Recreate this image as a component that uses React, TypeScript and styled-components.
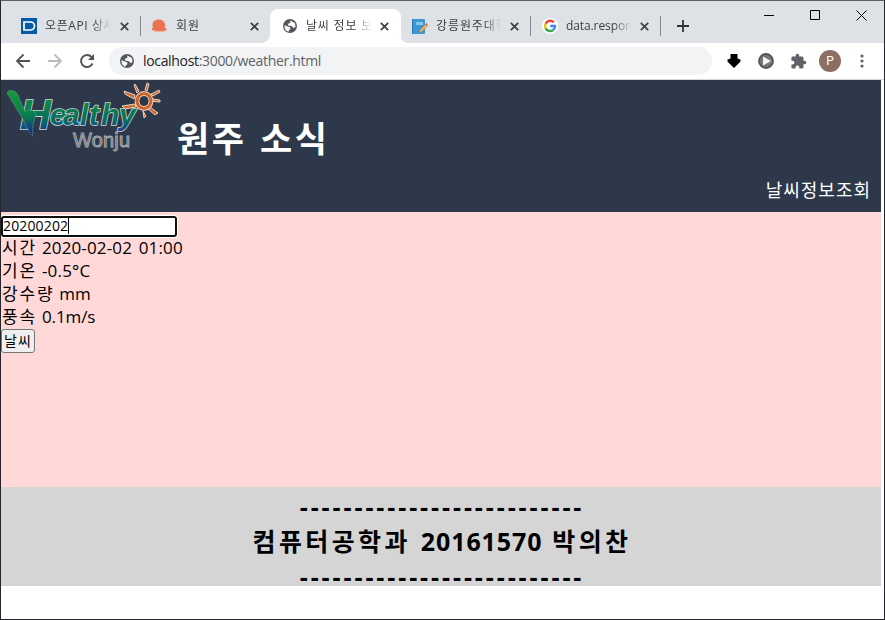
import React from "react";
import styled, { createGlobalStyle } from "styled-components";

const Global = createGlobalStyle`
  * { box-sizing: border-box; }
  body { margin: 0; background: #fff; font-family: "Open Sans", "Noto Sans CJK KR", sans-serif; }
  h1, h2, p { margin: 0; }
  svg { display: block; flex: none; }
`;

const Window = styled.div`
  width: 885px;
  height: 620px;
  border: 1px solid #24262b;
  border-top-color: #5d5e62;
  background: #fff;
  display: flex;
  flex-direction: column;
  overflow: hidden;
`;

const TabStrip = styled.div`
  height: 42px;
  background: #dee1e6;
  display: flex;
  padding: 8px 0 0 9px;
  flex: none;
`;

const Tab = styled.div<{ $active?: boolean; $divider?: boolean }>`
  position: relative;
  width: 130px;
  height: 34px;
  display: flex;
  align-items: center;
  padding: 0 9px 0 11px;
  border-radius: 8px 8px 0 0;
  background: ${(p) => (p.$active ? "#fff" : "transparent")};
  box-shadow: ${(p) => (p.$active ? "1px 0 0 #fff" : "none")};
  &::before {
    content: "";
    display: ${(p) => (p.$active ? "block" : "none")};
    position: absolute;
    left: -8px;
    right: -8px;
    bottom: 0;
    height: 8px;
    background:
      radial-gradient(circle at 0 0, transparent 7.5px, #fff 8px) left / 8px 8px no-repeat,
      radial-gradient(circle at 100% 0, transparent 7.5px, #fff 8px) right / 8px 8px no-repeat;
  }
  &::after {
    content: "";
    display: ${(p) => (p.$divider ? "block" : "none")};
    position: absolute;
    right: -1px;
    top: 7px;
    width: 1px;
    height: 20px;
    background: #85888d;
  }
`;

const TabIcon = styled.span<{ $width: number }>`
  width: ${(p) => p.$width}px;
  display: flex;
  justify-content: flex-end;
`;

const TabTitle = styled.span<{ $spacing?: number }>`
  width: 67px;
  margin-left: 8px;
  font-size: 12px;
  line-height: 18px;
  letter-spacing: ${(p) => p.$spacing ?? 0}px;
  color: #3c4043;
  white-space: nowrap;
  overflow: hidden;
  mask-image: linear-gradient(90deg, #000 70%, transparent 98%);
`;

const TabClose = styled.span`
  margin-left: auto;
  padding-right: 2px;
`;

const NewTab = styled.div`
  width: 46px;
  height: 34px;
  display: flex;
  align-items: center;
  justify-content: center;
`;

const Caption = styled.div`
  display: flex;
  margin: -8px 0 0 auto;
  height: 28px;
`;

const CaptionButton = styled.div`
  width: 46px;
  display: flex;
  justify-content: center;
  align-items: center;
`;

const Toolbar = styled.div`
  height: 37px;
  flex: none;
  border-bottom: 1px solid #d5d7da;
  display: flex;
  align-items: center;
  padding: 0 13px;
`;

const NavButtons = styled.div`
  display: flex;
  gap: 14px;
  width: 95px;
`;

const Omnibox = styled.div`
  width: 603px;
  height: 28px;
  border-radius: 14px;
  background: #f1f3f4;
  display: flex;
  align-items: center;
  padding-left: 10px;
  gap: 8px;
  font-size: 14px;
  line-height: 20px;
  letter-spacing: -0.33px;
  color: #5f6368;
`;

const Host = styled.span`
  color: #202124;
`;

const Extensions = styled.div`
  display: flex;
  align-items: center;
  margin-left: 14px;
`;

const Slot = styled.div<{ $width?: number }>`
  width: ${(p) => p.$width ?? 32}px;
  display: flex;
  justify-content: center;
  flex: none;
`;

const Avatar = styled.div`
  width: 22px;
  height: 22px;
  border-radius: 50%;
  background: #8d6e63;
  color: #fff;
  font: 12px/22px Roboto, sans-serif;
  text-align: center;
`;

const Page = styled.div`
  width: 880px;
  color: #000;
`;

const Header = styled.header`
  height: 132px;
  background: #2d394b;
  color: #fff;
  display: flex;
`;

const Title = styled.h1`
  font-size: 35px;
  line-height: 50px;
  letter-spacing: 2.5px;
  word-spacing: 2px;
  margin: 34px 0 0 16px;
  white-space: nowrap;
`;

const Menu = styled.nav`
  margin: 97px 10px 0 auto;
  font-size: 18px;
  line-height: 26px;
  letter-spacing: 1px;
`;

const Weather = styled.main`
  height: 275px;
  background: #ffd8d7;
  padding-top: 4px;
  display: flex;
  flex-direction: column;
  align-items: flex-start;
`;

const DateField = styled.div`
  width: 176px;
  height: 21px;
  border: 2px solid #101010;
  border-radius: 3px;
  box-shadow: 0 0 0 1px #fff;
  background: #fff;
  font-size: 14px;
  line-height: 15px;
  letter-spacing: 0.15px;
  display: flex;
  align-items: center;
  padding-bottom: 2px;
`;

const Caret = styled.span`
  width: 1px;
  height: 16px;
  background: #000;
`;

const Reading = styled.p`
  height: 23px;
  line-height: 21px;
  font-size: 17px;
  display: flex;
  gap: 5px;
  padding-left: 1px;
  white-space: nowrap;
`;

const Name = styled.span`
  letter-spacing: 1.8px;
`;

const Value = styled.span<{ $spacing?: number }>`
  letter-spacing: ${(p) => p.$spacing ?? 0}px;
  word-spacing: 2px;
`;

const Query = styled.button`
  width: 34px;
  height: 24px;
  border: 1px solid #767676;
  border-radius: 3px;
  background: #efefef;
  padding: 0;
  font: 14px/20px "Open Sans", "Noto Sans CJK KR", sans-serif;
  letter-spacing: 1px;
  color: #000;
  white-space: nowrap;
`;

const Footer = styled.footer`
  height: 99px;
  background: #d5d5d5;
  display: flex;
  flex-direction: column;
  align-items: center;
  padding: 2px 0 0 2px;
  overflow: hidden;
`;

const FooterLine = styled.h2<{ $spacing: number }>`
  font-size: 25px;
  line-height: 35px;
  height: 35px;
  flex: none;
  letter-spacing: ${(p) => p.$spacing}px;
  white-space: nowrap;
`;

const Digits = styled.span`
  letter-spacing: 0.9px;
`;

const CloseIcon = () => (
  <svg width="9" height="9" viewBox="0 0 9 9" stroke="#3c4043" strokeWidth="1.7">
    <path d="M.8.8l7.4 7.4M8.2.8L.8 8.2" />
  </svg>
);

const Globe = () => (
  <svg width="16" height="16" viewBox="0 0 16 16">
    <circle cx="8" cy="8" r="7" fill="#54585d" />
    <path d="M8.3 2.5 13 5l.5 4-2 1-2-2-3-.3-.8-2 2.600-.8zM2.400 7.200l3 1 3 1.300-.2 2-1.400.8v1.500c-3-.7-4.500-3-4.400-6.600z" fill="#f6f7f8" />
  </svg>
);

const DataPortalIcon = () => (
  <svg width="16" height="16" viewBox="0 0 16 16">
    <path fill="#035aa6" d="M0 0h16v16H0z" />
    <path d="M3 4h6.500a4 4 0 0 1 0 8H3z" fill="none" stroke="#fff" strokeWidth="1.7" />
  </svg>
);

const OctopusIcon = () => (
  <svg width="17" height="16" viewBox="0 0 17 16" fill="#ec7350">
    <path d="M2 9.500C.2 4.500 3.500 1.400 7.800 1.400s7.400 3.400 6 8.300l2 1.600-.4 1.500-2.200-.7.4 1.400H3.200l.8-1.300-2.700.4L.6 11z" />
    <path d="M3 13.400h11" stroke="#f5b39f" strokeWidth="1" />
  </svg>
);

const NotebookIcon = () => (
  <svg width="17" height="17" viewBox="0 0 17 17">
    <rect x="1" y="1" width="13" height="15" rx="1" fill="#3b97d3" />
    <path d="M1.500 1v15" stroke="#2579b0" />
    <path d="M5 4h7v3H5z" fill="#81c7ef" />
    <path d="m8 15 .8-3 6-6 1.800 1.800-6 6z" fill="#f2b668" stroke="#b06b3c" strokeWidth=".6" />
    <path d="m14.400 6 1-1 1.500 1.500-1 1z" fill="#df5a58" />
  </svg>
);

const GoogleIcon = () => (
  <svg width="16" height="16" viewBox="0 0 16 16">
    <circle cx="8" cy="8" r="8" fill="#fff" />
    <g fill="none" strokeWidth="2.400">
      <path d="M11.800 4.300A5 5 0 0 0 3.600 5.700" stroke="#ea4335" />
      <path d="M3.600 5.700a5 5 0 0 0 0 4.700" stroke="#fbbc05" />
      <path d="M3.600 10.400a5 5 0 0 0 7.700 1.400" stroke="#34a853" />
      <path d="M11.300 11.800A5 5 0 0 0 13 8H8.200" stroke="#4285f4" />
    </g>
  </svg>
);

const HealthyWonjuLogo = () => (
  <svg width="160" height="76" viewBox="1 80 160 76">
    <defs>
      <linearGradient id="brush" x1="0" y1="0" x2="0" y2="1">
        <stop offset="0" stopColor="#16983a" />
        <stop offset=".55" stopColor="#087e50" />
        <stop offset="1" stopColor="#12209a" />
      </linearGradient>
      <linearGradient id="word" gradientUnits="userSpaceOnUse" x1="0" y1="95" x2="0" y2="132">
        <stop offset="0" stopColor="#128f3c" />
        <stop offset=".65" stopColor="#08705f" />
        <stop offset="1" stopColor="#1a3c96" />
      </linearGradient>
    </defs>
    <text
      x="20 50 63 80 89 101 119"
      y="129 125 125 125 125 125 125"
      fontFamily="Liberation Sans"
      fontStyle="italic"
      fontWeight="700"
      fontSize="30"
      fill="url(#word)"
      stroke="#c9d8d4"
      strokeWidth="1.600"
      paintOrder="stroke"
    >
      <tspan fontSize="43">H</tspan>ealthy
    </text>
    <path d="M7 93q2-4 8-1.500 3 2 4.500 8l5.500 12q6-3 9.500 0 2 2 .5 7l-2 6-.5 11.500q-3-2-8.500-15z" fill="url(#brush)" stroke="#9fc1b6" strokeWidth=".6" strokeDasharray="1.200 1" />
    <text x="73" y="147" fontFamily="Liberation Sans" fontSize="20" textLength="57" lengthAdjust="spacing" fill="#696c72" stroke="#a9abad" strokeWidth=".9">
      Wonju
    </text>
    <path d="m135 95-11-4 1 3 9 5zM139 91l-4-7-1 1 3 8zM145 90l2-7 2 1-2 7zM151 94l8-4 1 2-7 4zM153 99l7 1v2l-7-.5zM150 107l8 6-3 2-7-6zM143 111l1 7 2-2zM135 104l-13 2 3 3 11-2z" fill="#d06a30" stroke="#f1ddd0" strokeWidth=".9" />
    <ellipse cx="144" cy="101" rx="7" ry="7.500" fill="none" stroke="#f0d6c5" strokeWidth="4.800" />
    <ellipse cx="144" cy="101" rx="7" ry="7.500" fill="none" stroke="#cf6428" strokeWidth="3" />
  </svg>
);

const tabs = [
  { title: "오픈API 상세", icon: <DataPortalIcon />, iconWidth: 16, divider: true, spacing: 0.6 },
  { title: "회원", icon: <OctopusIcon />, iconWidth: 17, spacing: 1 },
  { title: "날씨 정보 보기", icon: <Globe />, iconWidth: 17, active: true, spacing: 0.8 },
  { title: "강릉원주대학교", icon: <NotebookIcon />, iconWidth: 17, divider: true, spacing: 0.9 },
  { title: "data.response", icon: <GoogleIcon />, iconWidth: 17, divider: true, spacing: -0.1 },
];

const dashes = "-".repeat(26);

export default function App() {
  return (
    <Window>
      <Global />
      <TabStrip>
        {tabs.map((t) => (
          <Tab key={t.title} $active={t.active} $divider={t.divider}>
            <TabIcon $width={t.iconWidth}>{t.icon}</TabIcon>
            <TabTitle $spacing={t.spacing}>{t.title}</TabTitle>
            <TabClose><CloseIcon /></TabClose>
          </Tab>
        ))}
        <NewTab>
          <svg width="12" height="12" viewBox="0 0 12 12" stroke="#303338" strokeWidth="1.800"><path d="M6 0v12M0 6h12" /></svg>
        </NewTab>
        <Caption>
          <CaptionButton><svg width="10" height="10"><path d="M0 5.500h10" stroke="#000" /></svg></CaptionButton>
          <CaptionButton><svg width="10" height="10"><path d="M.5.5h9v9h-9z" fill="none" stroke="#000" /></svg></CaptionButton>
          <CaptionButton><svg width="11" height="11"><path d="m.5.5 10 10m0-10-10 10" stroke="#000" /></svg></CaptionButton>
        </Caption>
      </TabStrip>
      <Toolbar>
        <NavButtons>
          <svg width="18" height="18" viewBox="0 0 18 18" fill="none" stroke="#505459" strokeWidth="1.800"><path d="M16 9H3m6.500-6.500L3 9l6.500 6.500" /></svg>
          <svg width="18" height="18" viewBox="0 0 18 18" fill="none" stroke="#b9bbbe" strokeWidth="1.800"><path d="M2 9h13M8.500 2.500 15 9l-6.500 6.500" /></svg>
          <svg width="18" height="18" viewBox="0 0 18 18"><path d="M14.500 11.500a6 6 0 1 1-1-6.500" fill="none" stroke="#505459" strokeWidth="1.900" /><path d="M16 2v6h-6z" fill="#505459" /></svg>
        </NavButtons>
        <Omnibox>
          <Globe />
          <span><Host>localhost</Host>:3000/weather.html</span>
        </Omnibox>
        <Extensions>
          <Slot $width={16}><svg width="14" height="14" viewBox="0 0 14 14"><path d="M3.500 0h7v4.500l3 1v2L7 14 .5 7.500v-2l3-1z" /></svg></Slot>
          <Slot $width={48}>
            <svg width="16" height="16" viewBox="0 0 16 16"><circle cx="8" cy="8" r="7" fill="#777" stroke="#555" strokeWidth="1.800" /><path d="M5 3.500 13 8l-8 4.500z" fill="#f4f4f4" /></svg>
          </Slot>
          <Slot $width={16}>
            <svg width="17" height="17" viewBox="0 0 24 24" fill="#5f6368"><path d="M20.500 11H19V7a2 2 0 0 0-2-2h-4V3.500a2.500 2.500 0 0 0-5 0V5H4a2 2 0 0 0-2 2v3.800h1.500a2.700 2.700 0 0 1 0 5.400H2V20a2 2 0 0 0 2 2h3.800v-1.500a2.700 2.700 0 0 1 5.400 0V22H17a2 2 0 0 0 2-2v-4h1.500a2.500 2.500 0 0 0 0-5z" /></svg>
          </Slot>
          <Slot $width={48}><Avatar>P</Avatar></Slot>
          <Slot $width={16}><svg width="4" height="14" fill="#5f6368"><circle cx="2" cy="2" r="1.600" /><circle cx="2" cy="7" r="1.600" /><circle cx="2" cy="12" r="1.600" /></svg></Slot>
        </Extensions>
      </Toolbar>
      <Page>
        <Header>
          <HealthyWonjuLogo />
          <Title>원주 소식</Title>
          <Menu>날씨정보조회</Menu>
        </Header>
        <Weather>
          <DateField>20200202<Caret /></DateField>
          <Reading><Name>시간</Name><Value $spacing={0.15}>2020-02-02 01:00</Value></Reading>
          <Reading><Name>기온</Name><Value $spacing={0.2}>-0.5°C</Value></Reading>
          <Reading><Name>강수량</Name><Value $spacing={0}>mm</Value></Reading>
          <Reading><Name>풍속</Name><Value $spacing={-0.1}>0.1m/s</Value></Reading>
          <Query>날씨</Query>
        </Weather>
        <Footer>
          <FooterLine $spacing={2.9}>{dashes}</FooterLine>
          <FooterLine $spacing={3.4}>컴퓨터공학과 <Digits>20161570</Digits> 박의찬</FooterLine>
          <FooterLine $spacing={2.9}>{dashes}</FooterLine>
        </Footer>
      </Page>
    </Window>
  );
}
